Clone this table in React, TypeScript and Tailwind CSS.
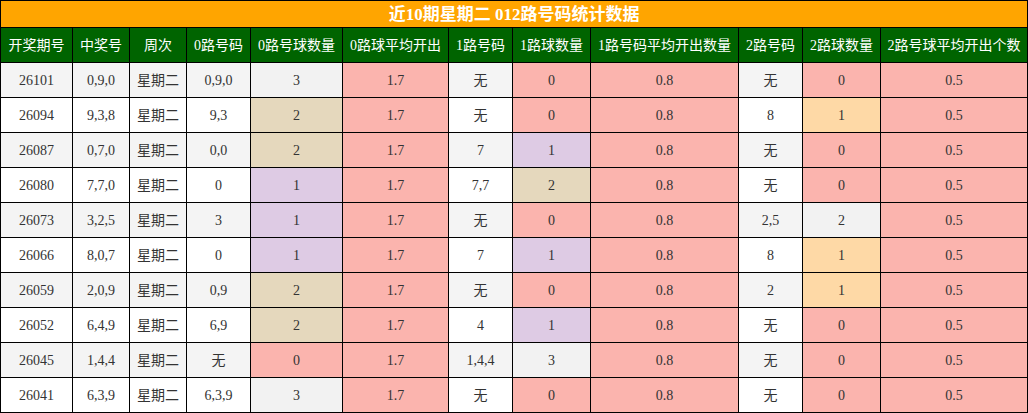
const widths = [72, 57, 57, 64, 92, 106, 64, 78, 148, 64, 78, 147]

const headers = [
  "开奖期号",
  "中奖号",
  "周次",
  "0路号码",
  "0路号球数量",
  "0路球平均开出",
  "1路号码",
  "1路球数量",
  "1路号码平均开出数量",
  "2路号码",
  "2路球数量",
  "2路号球平均开出个数",
]

// colour per count cell
const PINK = "bg-[#fbb4ae]"
const LAV = "bg-[#decbe4]"
const TAN = "bg-[#e5d8bd]"
const PEACH = "bg-[#fed9a6]"
const GRAY = "bg-[#f2f2f2]"

type Row = {
  id: string
  win: string
  r0: string
  c0: [string, string]
  r1: string
  c1: [string, string]
  r2: string
  c2: [string, string]
}

const rows: Row[] = [
  { id: "26101", win: "0,9,0", r0: "0,9,0", c0: ["3", GRAY], r1: "无", c1: ["0", PINK], r2: "无", c2: ["0", PINK] },
  { id: "26094", win: "9,3,8", r0: "9,3", c0: ["2", TAN], r1: "无", c1: ["0", PINK], r2: "8", c2: ["1", PEACH] },
  { id: "26087", win: "0,7,0", r0: "0,0", c0: ["2", TAN], r1: "7", c1: ["1", LAV], r2: "无", c2: ["0", PINK] },
  { id: "26080", win: "7,7,0", r0: "0", c0: ["1", LAV], r1: "7,7", c1: ["2", TAN], r2: "无", c2: ["0", PINK] },
  { id: "26073", win: "3,2,5", r0: "3", c0: ["1", LAV], r1: "无", c1: ["0", PINK], r2: "2,5", c2: ["2", GRAY] },
  { id: "26066", win: "8,0,7", r0: "0", c0: ["1", LAV], r1: "7", c1: ["1", LAV], r2: "8", c2: ["1", PEACH] },
  { id: "26059", win: "2,0,9", r0: "0,9", c0: ["2", TAN], r1: "无", c1: ["0", PINK], r2: "2", c2: ["1", PEACH] },
  { id: "26052", win: "6,4,9", r0: "6,9", c0: ["2", TAN], r1: "4", c1: ["1", LAV], r2: "无", c2: ["0", PINK] },
  { id: "26045", win: "1,4,4", r0: "无", c0: ["0", PINK], r1: "1,4,4", c1: ["3", GRAY], r2: "无", c2: ["0", PINK] },
  { id: "26041", win: "6,3,9", r0: "6,3,9", c0: ["3", GRAY], r1: "无", c1: ["0", PINK], r2: "无", c2: ["0", PINK] },
]

const font = { fontFamily: '"Liberation Serif", "Noto Sans CJK SC", serif' }

function Cell({ children, bg }: { children: React.ReactNode; bg: string }) {
  return (
    <td className={`border border-black h-[35px] p-0 text-center text-[14px] text-[#333] ${bg}`}>
      {children}
    </td>
  )
}

export default function App() {
  return (
    <div className="w-[1028px] h-[413px] bg-white" style={font}>
      <table className="table-fixed border-collapse w-[1027px]">
        <colgroup>
          {widths.map((w, i) => (
            <col key={i} style={{ width: w }} />
          ))}
        </colgroup>
        <thead>
          <tr>
            <th
              colSpan={12}
              className="border border-black bg-[#ffa500] h-[27px] p-0 text-center text-[17px] font-bold text-white leading-none"
            >
              近10期星期二 012路号码统计数据
            </th>
          </tr>
          <tr>
            {headers.map((h) => (
              <th
                key={h}
                className="border border-black bg-[#006400] h-[35px] p-0 text-center text-[14px] font-normal text-white whitespace-nowrap"
              >
                {h}
              </th>
            ))}
          </tr>
        </thead>
        <tbody>
          {rows.map((r, i) => {
            const stripe = i % 2 === 0 ? "bg-[#f4f4f4]" : "bg-white"
            return (
              <tr key={r.id}>
                <Cell bg={stripe}>{r.id}</Cell>
                <Cell bg={stripe}>{r.win}</Cell>
                <Cell bg={stripe}>星期二</Cell>
                <Cell bg={stripe}>{r.r0}</Cell>
                <Cell bg={r.c0[1]}>{r.c0[0]}</Cell>
                <Cell bg={PINK}>1.7</Cell>
                <Cell bg={stripe}>{r.r1}</Cell>
                <Cell bg={r.c1[1]}>{r.c1[0]}</Cell>
                <Cell bg={PINK}>0.8</Cell>
                <Cell bg={stripe}>{r.r2}</Cell>
                <Cell bg={r.c2[1]}>{r.c2[0]}</Cell>
                <Cell bg={PINK}>0.5</Cell>
              </tr>
            )
          })}
        </tbody>
      </table>
    </div>
  )
}
